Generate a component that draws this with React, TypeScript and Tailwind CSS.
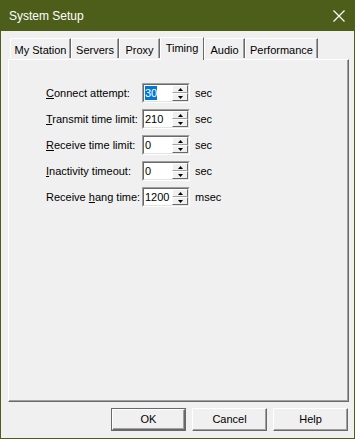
import React from "react";

const tabs = [
    { label: "My Station", w: "w-[61px]" },
    { label: "Servers", w: "w-[48px]" },
    { label: "Proxy", w: "w-[41px]" },
    { label: "Timing", w: "w-[44px]", active: true },
    { label: "Audio", w: "w-[41px]" },
    { label: "Performance", w: "w-[73px]" },
];

const rows = [
    { pre: "", key: "C", post: "onnect attempt:", value: "30", unit: "sec", selected: true },
    { pre: "", key: "T", post: "ransmit time limit:", value: "210", unit: "sec" },
    { pre: "", key: "R", post: "eceive time limit:", value: "0", unit: "sec" },
    { pre: "", key: "I", post: "nactivity timeout:", value: "0", unit: "sec" },
    { pre: "Receive ", key: "h", post: "ang time:", value: "1200", unit: "msec" },
];

const Spinner = ({ value, selected }: { value: string; selected?: boolean }) => {
    return (
        <div className="w-[48px] h-[20px] border border-t-[#a0a0a0] border-l-[#a0a0a0] border-r-white border-b-white">
            <div className="h-full flex bg-white border border-t-[#696969] border-l-[#696969] border-r-[#e3e3e3] border-b-[#e3e3e3]">
                <div className="flex-1 pl-[1px] flex items-center">
                    <span className={selected ? "bg-[#0078d7] text-white leading-[14px]" : "leading-[14px]"}>{value}</span>
                </div>
                <div className="w-[16px] flex flex-col">
                    {/* up / down arrow buttons */}
                    <div className="flex-1 bg-[#f0f0f0] border border-t-white border-l-white border-r-[#696969] border-b-[#a0a0a0] flex items-center justify-center">
                        <svg width="5" height="3" viewBox="0 0 5 3"><path d="M2.5 0 L5 3 L0 3 Z" fill="#000" /></svg>
                    </div>
                    <div className="flex-1 bg-[#f0f0f0] border border-t-white border-l-white border-r-[#696969] border-b-[#696969] flex items-center justify-center">
                        <svg width="5" height="3" viewBox="0 0 5 3"><path d="M0 0 L5 0 L2.5 3 Z" fill="#000" /></svg>
                    </div>
                </div>
            </div>
        </div>
    );
};

const Button = ({ label, isDefault }: { label: string; isDefault?: boolean }) => {
    return (
        <div className={`w-[75px] h-[23px] ${isDefault ? "border border-[#696969]" : ""}`}>
            <div className="h-full flex items-center justify-center bg-[#f0f0f0] border border-t-white border-l-white border-r-[#696969] border-b-[#696969] shadow-[inset_-1px_-1px_0_#a0a0a0]">
                {label}
            </div>
        </div>
    );
};

export default function App() {
    return (
        <div className="w-[355px] h-[439px] flex flex-col bg-[#4d5e1a] text-[11px] text-black" style={{ fontFamily: '"Liberation Sans", Arial, sans-serif' }}>
            {/* title bar */}
            <div className="h-[31px] flex items-center justify-between pl-[9px] pr-[10px] text-white text-[12px]">
                <span>System Setup</span>
                <svg width="12" height="12" viewBox="0 0 12 12">
                    <path d="M0.5 0.5 L11.5 11.5 M11.5 0.5 L0.5 11.5" stroke="#fff" strokeWidth="1.2" />
                </svg>
            </div>

            <div className="flex-1 mx-[1px] mb-[1px] bg-[#f0f0f0] flex flex-col pt-[6px] pl-[7px] pr-[5px]">
                {/* tabs */}
                <div className="h-[22px] flex items-end pl-[2px]">
                    {tabs.map((t) =>
                        t.active ? (
                            <div key={t.label} className={`${t.w} h-[23px] -mb-px relative z-10 bg-[#f0f0f0] border-t border-l border-white border-r border-r-[#696969] flex justify-center pt-[2px]`}>
                                {t.label}
                            </div>
                        ) : (
                            <div key={t.label} className={`${t.w} h-[20px] mb-px bg-[#f0f0f0] border-t border-l border-white border-r border-r-[#696969] shadow-[inset_-1px_0_0_#a0a0a0] flex justify-center pt-[3px]`}>
                                {t.label}
                            </div>
                        )
                    )}
                </div>

                {/* tab panel */}
                <div className="h-[343px] border border-t-white border-l-white border-r-[#696969] border-b-[#696969] shadow-[inset_-1px_-1px_0_#a0a0a0] pt-[23px] pl-[37px] flex flex-col gap-[6px]">
                    {rows.map((r) => (
                        <div key={r.value + r.post} className="flex items-center h-[20px]">
                            <div className="w-[96px]">
                                {r.pre}<u>{r.key}</u>{r.post}
                            </div>
                            <Spinner value={r.value} selected={r.selected} />
                            <div className="pl-[5px]">{r.unit}</div>
                        </div>
                    ))}
                </div>

                {/* buttons */}
                <div className="flex justify-end gap-[6px] pt-[6px] pr-[1px]">
                    <Button label="OK" isDefault />
                    <Button label="Cancel" />
                    <Button label="Help" />
                </div>
            </div>
        </div>
    );
}
